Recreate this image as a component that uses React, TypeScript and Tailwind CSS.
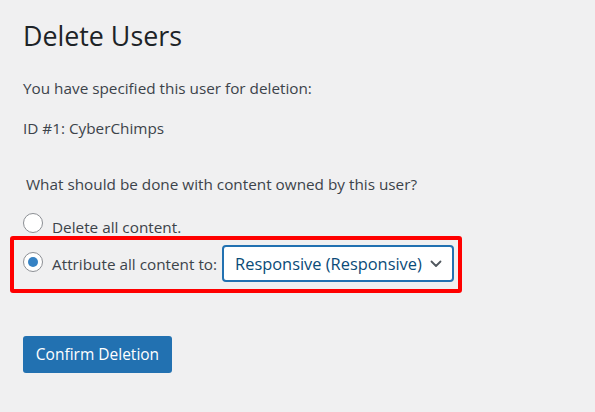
import React from 'react';

const font = { fontFamily: '"Open Sans", "Noto Sans", sans-serif' };

function Radio({ checked }: { checked?: boolean }) {
  return (
    <span className="flex h-[20px] w-[20px] shrink-0 items-center justify-center rounded-full border border-[#8c8f94] bg-white">
      {checked && <span className="h-[10px] w-[10px] rounded-full bg-[#3582c4]" />}
    </span>
  );
}

export default function App() {
  return (
    <div
      className="h-[412px] w-[595px] overflow-hidden bg-[#f0f0f1] pl-[23px] text-[#3c434a]"
      style={font}
    >
      <h1 className="pt-[18px] text-[26.8px] leading-[36px] text-[#1d2327]">Delete Users</h1>

      <p className="mt-[24px] text-[15.3px] leading-[20px]">You have specified this user for deletion:</p>
      <p className="mt-[20px] text-[15.3px] leading-[20px]">ID #1: CyberChimps</p>

      <p className="mt-[36px] pl-[3px] text-[15.3px] leading-[20px]">What should be done with content owned by this user?</p>

      {/* Delete option */}
      <div className="mt-[19px] flex items-start">
        <Radio />
        <span className="ml-[9px] mt-[4px] text-[15.3px] leading-[20px]">Delete all content.</span>
      </div>

      {/* Attribute option, highlighted */}
      <div className="ml-[-13px] mt-[-1px] flex w-[452px] items-start rounded-[3px] border-4 border-[#ff0000] pb-[7px] pl-[9px]">
        <span className="mt-[12px]">
          <Radio checked />
        </span>
        <span className="ml-[9px] mt-[14px] whitespace-nowrap text-[15.3px] leading-[20px]">Attribute all content to:</span>
        <div className="ml-[5px] mt-[5px] flex h-[37px] w-[232px] shrink-0 items-center justify-between rounded-[4px] border-2 border-[#2271b1] bg-white pl-[11px] pr-[10px] text-[#0a4b78]">
          <span className="whitespace-nowrap text-[16.4px] leading-[20px]">Responsive (Responsive)</span>
          <svg width="12" height="12" viewBox="0 0 12 12" fill="none">
            <path d="M1.5 3.5 L6 8 L10.5 3.5" stroke="#50575e" strokeWidth="1.8" strokeLinecap="round" strokeLinejoin="round" />
          </svg>
        </div>
      </div>

      <button className="mt-[43px] h-[37px] w-[149px] rounded-[3px] bg-[#2271b1] text-[15.5px] text-white">
        Confirm Deletion
      </button>
    </div>
  );
}
